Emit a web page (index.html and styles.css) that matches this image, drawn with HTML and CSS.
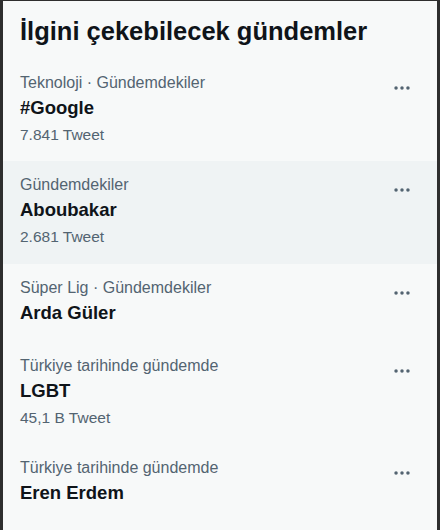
FILE: index.html
```html
<!DOCTYPE html>
<html lang="tr">
<head>
<meta charset="utf-8">
<link rel="stylesheet" href="styles.css">
</head>
<body>
<div class="frame">
  <div class="panel">
    <h2 class="title">İlgini çekebilecek gündemler</h2>
    <div class="item">
      <div class="text">
        <div class="meta">Teknoloji · Gündemdekiler</div>
        <div class="name">#Google</div>
        <div class="count">7.841 Tweet</div>
      </div>
      <div class="more"><svg viewBox="0 0 24 24" width="22" height="22"><circle cx="5.5" cy="12" r="1.9"/><circle cx="12" cy="12" r="1.9"/><circle cx="18.5" cy="12" r="1.9"/></svg></div>
    </div>
    <div class="item hover">
      <div class="text">
        <div class="meta">Gündemdekiler</div>
        <div class="name">Aboubakar</div>
        <div class="count">2.681 Tweet</div>
      </div>
      <div class="more"><svg viewBox="0 0 24 24" width="22" height="22"><circle cx="5.5" cy="12" r="1.9"/><circle cx="12" cy="12" r="1.9"/><circle cx="18.5" cy="12" r="1.9"/></svg></div>
    </div>
    <div class="item">
      <div class="text">
        <div class="meta">Süper Lig · Gündemdekiler</div>
        <div class="name">Arda Güler</div>
      </div>
      <div class="more"><svg viewBox="0 0 24 24" width="22" height="22"><circle cx="5.5" cy="12" r="1.9"/><circle cx="12" cy="12" r="1.9"/><circle cx="18.5" cy="12" r="1.9"/></svg></div>
    </div>
    <div class="item">
      <div class="text">
        <div class="meta">Türkiye tarihinde gündemde</div>
        <div class="name">LGBT</div>
        <div class="count">45,1 B Tweet</div>
      </div>
      <div class="more"><svg viewBox="0 0 24 24" width="22" height="22"><circle cx="5.5" cy="12" r="1.9"/><circle cx="12" cy="12" r="1.9"/><circle cx="18.5" cy="12" r="1.9"/></svg></div>
    </div>
    <div class="item">
      <div class="text">
        <div class="meta">Türkiye tarihinde gündemde</div>
        <div class="name">Eren Erdem</div>
      </div>
      <div class="more"><svg viewBox="0 0 24 24" width="22" height="22"><circle cx="5.5" cy="12" r="1.9"/><circle cx="12" cy="12" r="1.9"/><circle cx="18.5" cy="12" r="1.9"/></svg></div>
    </div>
  </div>
</div>
</body>
</html>
```

FILE: styles.css
```css
html, body {
  margin: 0;
  padding: 0;
  background: #2e2e2e;
}
.frame {
  width: 440px;
  height: 530px;
  box-sizing: border-box;
  padding: 1px 3px 0 3px;
  background: #2e2e2e;
  overflow: hidden;
}
.panel {
  background: #f7f9f9;
  height: 529px;
  font-family: "Liberation Sans", Arial, sans-serif;
  color: #0f1419;
}
.title {
  margin: 0;
  height: 58px;
  box-sizing: border-box;
  padding: 12px 0 0 17px;
  font-size: 25.5px;
  line-height: 36px;
  font-weight: 700;
}
.item {
  display: flex;
  justify-content: space-between;
  align-items: flex-start;
  padding: 14px 24px 14px 17px;
}
.item.hover {
  background: #eff3f4;
  padding-bottom: 15px;
}
.meta, .count {
  font-size: 16px;
  line-height: 20px;
  color: #536471;
}
.count {
  font-size: 15.5px;
  line-height: 24px;
}
.name {
  font-size: 18.5px;
  line-height: 30px;
  font-weight: 700;
}
.more {
  margin-top: 4px;
  fill: #536471;
  display: flex;
}
```
